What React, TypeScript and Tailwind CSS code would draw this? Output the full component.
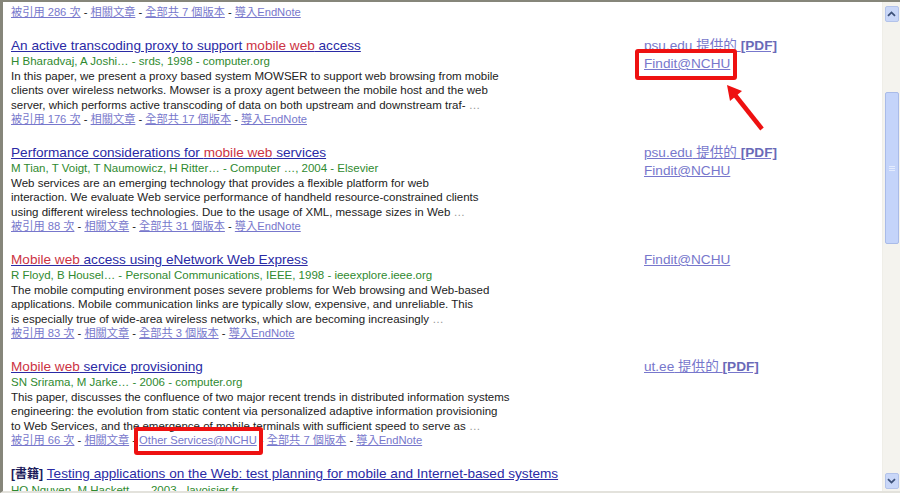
import React from 'react';

type Result = {
  title: React.ReactNode;
  authors: string;
  snippet: string[];
  links: string[];
  boxedLink?: string;
  side: { source?: string; findit?: boolean };
};

const Hl = ({ children }: { children: React.ReactNode }) => (
  <span className="text-[#cc3344]">{children}</span>
);

const results: Result[] = [
  {
    title: (
      <>
        An active transcoding proxy to support <Hl>mobile web</Hl> access
      </>
    ),
    authors: 'H Bharadvaj, A Joshi… - srds, 1998 - computer.org',
    snippet: [
      'In this paper, we present a proxy based system MOWSER to support web browsing from mobile',
      'clients over wireless networks. Mowser is a proxy agent between the mobile host and the web',
      'server, which performs active transcoding of data on both upstream and downstream traf-',
    ],
    links: ['被引用 176 次', '相關文章', '全部共 17 個版本', '導入EndNote'],
    side: { source: 'psu.edu', findit: true },
  },
  {
    title: (
      <>
        Performance considerations for <Hl>mobile web</Hl> services
      </>
    ),
    authors: 'M Tian, T Voigt, T Naumowicz, H Ritter… - Computer …, 2004 - Elsevier',
    snippet: [
      'Web services are an emerging technology that provides a flexible platform for web',
      'interaction. We evaluate Web service performance of handheld resource-constrained clients',
      'using different wireless technologies. Due to the usage of XML, message sizes in Web',
    ],
    links: ['被引用 88 次', '相關文章', '全部共 31 個版本', '導入EndNote'],
    side: { source: 'psu.edu', findit: true },
  },
  {
    title: (
      <>
        <Hl>Mobile web</Hl> access using eNetwork Web Express
      </>
    ),
    authors: 'R Floyd, B Housel… - Personal Communications, IEEE, 1998 - ieeexplore.ieee.org',
    snippet: [
      'The mobile computing environment poses severe problems for Web browsing and Web-based',
      'applications. Mobile communication links are typically slow, expensive, and unreliable. This',
      'is especially true of wide-area wireless networks, which are becoming increasingly',
    ],
    links: ['被引用 83 次', '相關文章', '全部共 3 個版本', '導入EndNote'],
    side: { findit: true },
  },
  {
    title: (
      <>
        <Hl>Mobile web</Hl> service provisioning
      </>
    ),
    authors: 'SN Srirama, M Jarke… - 2006 - computer.org',
    snippet: [
      'This paper, discusses the confluence of two major recent trends in distributed information systems',
      'engineering: the evolution from static content via personalized adaptive information provisioning',
      'to Web Services, and the emergence of mobile terminals with sufficient speed to serve as',
    ],
    links: ['被引用 66 次', '相關文章', 'Other Services@NCHU', '全部共 7 個版本', '導入EndNote'],
    boxedLink: 'Other Services@NCHU',
    side: { source: 'ut.ee' },
  },
];

const LinkRow = ({ links, boxed }: { links: string[]; boxed?: string }) => (
  <div className="leading-[14.5px] text-[11.2px] text-[#222]">
    {links.map((l, i) => (
      <React.Fragment key={l}>
        {i > 0 && ' - '}
        {l === boxed ? (
          <span className="relative inline-block">
            <a className="text-[#7777cc] underline">{l}</a>
            <span className="absolute -left-[5px] -right-[6px] -top-[6px] -bottom-[7px] rounded-[3px] border-[4px] border-[#ee1111]" />
          </span>
        ) : (
          <a className="text-[#7777cc] underline">{l}</a>
        )}
      </React.Fragment>
    ))}
  </div>
);

const Arrow = () => (
  <svg className="absolute left-[75px] top-[25px]" width="50" height="55" viewBox="0 0 50 55">
    <line x1="16" y1="15" x2="43" y2="49" stroke="#ee1111" strokeWidth="4.5" />
    <polygon points="8,5 23,11 11,21" fill="#ee1111" />
  </svg>
);

const Chevron = ({ down }: { down?: boolean }) => (
  <svg width="9" height="6" viewBox="0 0 9 6">
    <path
      d={down ? 'M1 1.2 L4.5 4.6 L8 1.2' : 'M1 4.8 L4.5 1.4 L8 4.8'}
      fill="none"
      stroke="#3d5178"
      strokeWidth="1.8"
    />
  </svg>
);

const ScrollButton = ({ down }: { down?: boolean }) => (
  <div className="flex h-[16px] w-[14px] items-center justify-center rounded-[2px] border border-[#b3c3ea] bg-[#c9d7f8]">
    <Chevron down={down} />
  </div>
);

export default function App() {
  return (
    <div className="flex h-[493px] w-[900px] overflow-hidden border-t-2 border-l-[3px] border-b-2 border-[#86867a] border-b-[#e3e2dc] bg-white font-[Liberation_Sans,Noto_Sans_CJK_TC,sans-serif]">
      <div className="flex flex-1 flex-col gap-[17.5px] overflow-hidden pl-[8px] pt-[3px]">
        <LinkRow links={['被引用 286 次', '相關文章', '全部共 7 個版本', '導入EndNote']} />

        {results.map((r, idx) => (
          <div key={idx} className="flex">
            <div className="w-[633px] shrink-0">
              <div className="leading-[17px] text-[13.6px]">
                <a className="text-[#2a2aa5] underline">{r.title}</a>
              </div>
              <div className="leading-[14.5px] text-[11.5px] text-[#2f8a2f]">{r.authors}</div>
              <div className="leading-[14.5px] text-[11.5px] text-[#222]">
                {r.snippet.map((s, i) => (
                  <div key={i}>
                    {s}
                    {i === 2 && <span className="text-[#999]"> …</span>}
                  </div>
                ))}
              </div>
              <LinkRow links={r.links} boxed={r.boxedLink} />
            </div>
            <div className="flex flex-col text-[13.6px] leading-[18px]">
              {r.side.source && (
                <a className="text-[#7777cc] underline">
                  {r.side.source} 提供的 <b className="text-[#6a6ab8]">[PDF]</b>
                </a>
              )}
              {r.side.findit && (
                <div>
                  {idx === 0 ? (
                    <span className="relative inline-block">
                      <a className="text-[#7777cc] underline">Findit@NCHU</a>
                      <span className="absolute -left-[9px] -right-[7px] -top-[6px] -bottom-[7px] rounded-[3px] border-[4px] border-[#ee1111]" />
                      <Arrow />
                    </span>
                  ) : (
                    <a className="text-[#7777cc] underline">Findit@NCHU</a>
                  )}
                </div>
              )}
            </div>
          </div>
        ))}

        <div>
          <div className="leading-[17px] text-[13.6px]">
            <b className="text-[12px] text-[#1a1a5a]">[書籍]</b>{' '}
            <a className="text-[#2a2aa5] underline">
              Testing applications on the Web: test planning for mobile and Internet-based systems
            </a>
          </div>
          <div className="leading-[14.5px] text-[11.5px] text-[#2f8a2f]">HQ Nguyen, M Hackett… - 2003 - lavoisier.fr</div>
        </div>
      </div>

      <div className="flex w-[18px] shrink-0 flex-col items-center border-l border-[#efeee8] bg-[#f4f3ee] pt-[4px] pb-[2px]">
        <ScrollButton />
        <div className="mt-[70px] flex h-[152px] w-[14px] items-center justify-center rounded-[2px] border border-[#a9bbe8] bg-[#c4d4fa]">
          <div className="flex flex-col gap-[1px]">
            <div className="h-px w-[6px] bg-[#e4ecfe]" />
            <div className="h-px w-[6px] bg-[#e4ecfe]" />
            <div className="h-px w-[6px] bg-[#e4ecfe]" />
          </div>
        </div>
        <div className="flex-1" />
        <ScrollButton down />
      </div>
    </div>
  );
}
